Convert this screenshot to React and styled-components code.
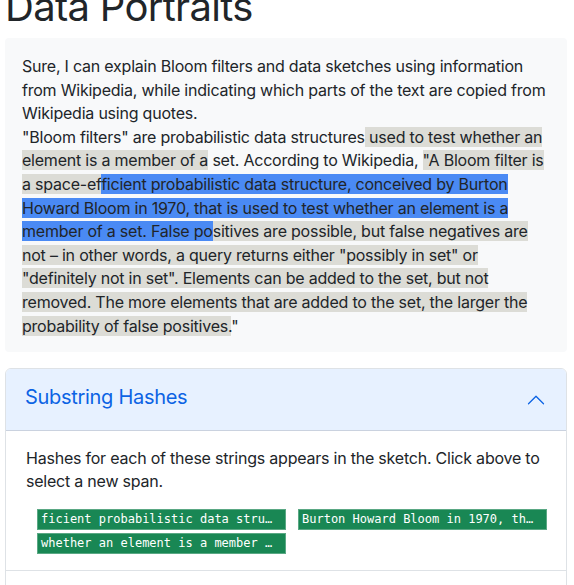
import React from "react";
import styled, { createGlobalStyle } from "styled-components";

const Global = createGlobalStyle`
  html, body { margin: 0; padding: 0; background: #fff; }
  body {
    font-family: Inter, "Noto Sans", "Liberation Sans", sans-serif;
    font-size: 16px;
    line-height: 1.5;
    letter-spacing: -0.22px;
    color: #212529;
    overflow: hidden;
  }
  * { box-sizing: border-box; }
`;

const Page = styled.div`
  padding: 0 7px 0 5px;
  margin-top: -17px;
`;

const Title = styled.h1`
  margin: 0 0 7px;
  font-size: 40px;
  font-weight: 400;
  line-height: 48px;
  letter-spacing: -0.7px;
  color: #212529;
`;

const Quote = styled.div`
  background: #f8f9fa;
  padding: 17px 17px 14px;
  border-radius: 4px;
  line-height: 23.6px;
`;

const Mark = styled.span`
  background: ${(p) => (p.$tone === "blue" ? "#4a8af4" : "#dcdcd6")};
`;

const Accordion = styled.div`
  margin-top: 16px;
  border: 1px solid #dee2e6;
  border-radius: 6px;
  overflow: hidden;
  background: #fff;
`;

const Item = styled.div`
  & + & { border-top: 1px solid #dee2e6; }
`;

const Header = styled.button`
  display: flex;
  align-items: center;
  width: 100%;
  padding: 13px 20px 19px 19px;
  border: 0;
  background: ${(p) => (p.$open ? "#e7f1ff" : "#fff")};
  color: ${(p) => (p.$open ? "#0c63e4" : "#212529")};
  box-shadow: ${(p) => (p.$open ? "inset 0 -1px 0 rgba(0,0,0,.125)" : "none")};
  font-family: inherit;
  font-size: 20px;
  line-height: 30px;
  letter-spacing: -0.3px;
  text-align: left;
  cursor: pointer;
`;

const HeaderLabel = styled.span`
  flex: 1;
`;

const Chevron = styled.svg`
  width: 20px;
  height: 20px;
  margin-top: 6px;
  flex-shrink: 0;
  transform: ${(p) => (p.$open ? "rotate(-180deg)" : "none")};
`;

const Body = styled.div`
  padding: 16px 20px 16px 20px;
`;

const Paragraph = styled.p`
  margin: 0 0 16px;
  line-height: 23px;
`;

const ChipGrid = styled.div`
  display: grid;
  grid-template-columns: 249px 249px;
  column-gap: 12px;
  row-gap: 3px;
  margin-left: 11px;
`;

const Chip = styled.div`
  height: 21px;
  padding: 0 3px;
  background: #198754;
  border: 1px solid #5aa884;
  color: #fff;
  font-family: "DejaVu Sans Mono", "Liberation Mono", monospace;
  font-size: 12px;
  line-height: 19px;
  letter-spacing: 0;
  white-space: pre;
  overflow: hidden;
`;

const ChevronIcon = ({ open }) => (
  <Chevron $open={open} viewBox="0 0 16 16" fill={open ? "#0c63e4" : "#212529"}>
    <path
      fillRule="evenodd"
      d="M1.646 4.646a.5.5 0 0 1 .708 0L8 10.293l5.646-5.647a.5.5 0 0 1 .708.708l-6 6a.5.5 0 0 1-.708 0l-6-6a.5.5 0 0 1 0-.708z"
    />
  </Chevron>
);

const chips = [
  "ficient probabilistic data stru…",
  "Burton Howard Bloom in 1970, th…",
  "whether an element is a member …",
];

export default function App() {
  return (
    <>
      <Global />
      <Page>
        <Title>Data Portraits</Title>
        <Quote>
          Sure, I can explain Bloom filters and data sketches using information
          from Wikipedia, while indicating which parts of the text are copied from
          Wikipedia using quotes.
          <br />
          "Bloom filters" are probabilistic data structures
          <Mark> used to test whether an element is a member of a</Mark> set. According
          to Wikipedia, <Mark>"A Bloom filter is a space-ef</Mark>
          <Mark $tone="blue">
            ficient probabilistic data structure, conceived by Burton Howard Bloom in
            1970, that is used to test whether an element is a member of a set. False po
          </Mark>
          <Mark>
            sitives are possible, but false negatives are not – in other words, a query
            returns either "possibly in set" or "definitely not in set". Elements can be
            added to the set, but not removed. The more elements that are added to the
            set, the larger the probability of false positives.
          </Mark>
          "
        </Quote>
        <Accordion>
          <Item>
            <Header $open>
              <HeaderLabel>Substring Hashes</HeaderLabel>
              <ChevronIcon open />
            </Header>
            <Body>
              <Paragraph>
                Hashes for each of these strings appears in the sketch. Click above to
                select a new span.
              </Paragraph>
              <ChipGrid>
                {chips.map((c) => (
                  <Chip key={c}>{c}</Chip>
                ))}
              </ChipGrid>
            </Body>
          </Item>
          <Item>
            <Header>
              <HeaderLabel>Sketch Details</HeaderLabel>
              <ChevronIcon />
            </Header>
          </Item>
        </Accordion>
      </Page>
    </>
  );
}
